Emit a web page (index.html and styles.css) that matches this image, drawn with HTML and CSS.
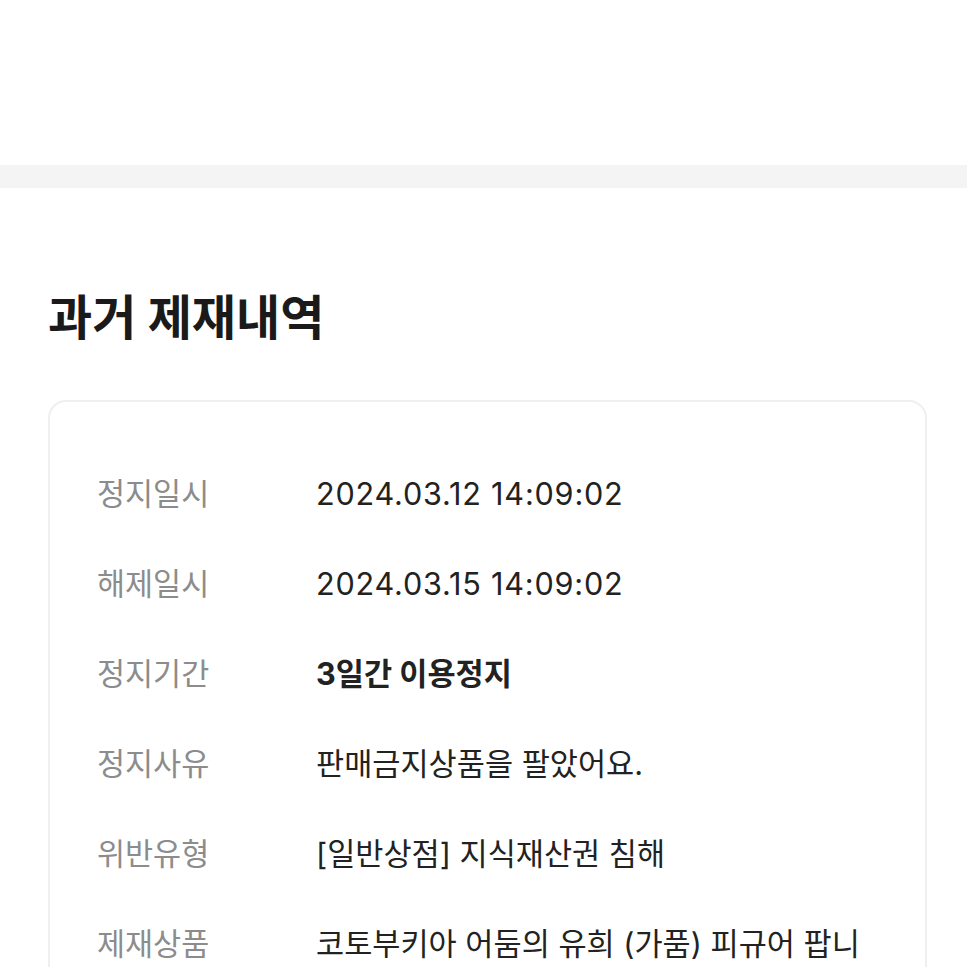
FILE: index.html
```html
<!DOCTYPE html>
<html lang="ko">
<head>
    <meta charset="UTF-8">
    <meta name="viewport" content="width=device-width, initial-scale=1.0">
    <title>과거 제재내역</title>
    <link rel="stylesheet" href="styles.css">
</head>
<body>
    <div class="top-space"></div>
    <div class="divider"></div>
    <section class="history">
        <h2>과거 제재내역</h2>
        <div class="card">
            <div class="row">
                <span class="label">정지일시</span>
                <span class="value date">2024.03.12 14:09:02</span>
            </div>
            <div class="row">
                <span class="label">해제일시</span>
                <span class="value date">2024.03.15 14:09:02</span>
            </div>
            <div class="row">
                <span class="label">정지기간</span>
                <span class="value strong">3일간 이용정지</span>
            </div>
            <div class="row">
                <span class="label">정지사유</span>
                <span class="value">판매금지상품을 팔았어요.</span>
            </div>
            <div class="row">
                <span class="label">위반유형</span>
                <span class="value">[일반상점] 지식재산권 침해</span>
            </div>
            <div class="row">
                <span class="label">제재상품</span>
                <span class="value">코토부키아 어둠의 유희 (가품) 피규어 팝니다</span>
            </div>
        </div>
    </section>
</body>
</html>
```

FILE: styles.css
```css
body {
    font-family: Inter, "Noto Sans CJK KR", "Noto Sans", sans-serif;
    margin: 0;
    padding: 0;
    background-color: #fff;
    color: #222;
    overflow: hidden;
}

.top-space {
    height: 165px;
}

.divider {
    height: 23px;
    background-color: #f4f4f4;
}

.history {
    padding: 0 40px 0 48px;
}

h2 {
    margin: 98px 0 0;
    font-size: 48px;
    font-weight: 700;
    line-height: 64px;
    color: #1a1a1a;
}

.card {
    margin-top: 50px;
    border: 2px solid #efefef;
    border-radius: 18px;
    padding: 47px 47px 0;
}

.row {
    display: flex;
    align-items: flex-start;
    padding: 25px 0;
    font-size: 30.6px;
    line-height: 40px;
}

.label {
    width: 219px;
    flex-shrink: 0;
    font-size: 30.5px;
    color: #8c8c8c;
}

.value {
    color: #222;
    min-width: 0;
}

.date {
    letter-spacing: 0.8px;
}

.strong {
    font-weight: 700;
}
```
